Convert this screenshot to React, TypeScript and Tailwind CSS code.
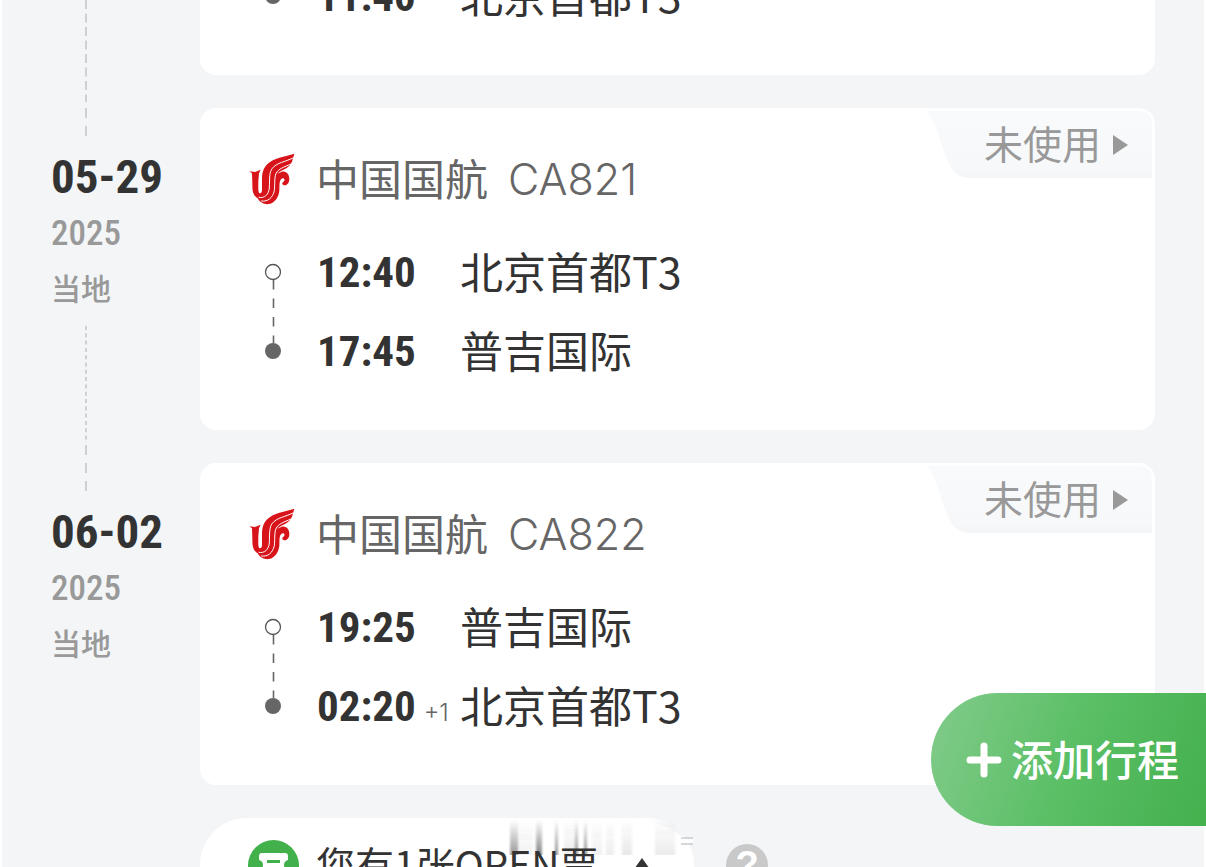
import React from "react";

type Leg = { time: string; place: string; dayOffset?: string };

type Trip = {
  date: string;
  year: string;
  zone: string;
  airline: string;
  flight: string;
  status: string;
  legs: [Leg, Leg];
};

const trips: Trip[] = [
  {
    date: "05-29",
    year: "2025",
    zone: "当地",
    airline: "中国国航",
    flight: "CA821",
    status: "未使用",
    legs: [
      { time: "12:40", place: "北京首都T3" },
      { time: "17:45", place: "普吉国际" },
    ],
  },
  {
    date: "06-02",
    year: "2025",
    zone: "当地",
    airline: "中国国航",
    flight: "CA822",
    status: "未使用",
    legs: [
      { time: "19:25", place: "普吉国际" },
      { time: "02:20", place: "北京首都T3", dayOffset: "+1" },
    ],
  },
];

const narrow = "font-['Roboto_Condensed','Open_Sans_Condensed','Noto_Sans_Condensed','Noto_Sans_CJK_SC',sans-serif]";

function AirlineLogo() {
  return (
    <svg className="h-[52px] w-[46px] shrink-0" viewBox="656 37 138 156" fill="none" aria-hidden="true">
      <path
        fill="#d8141b"
        d="M792 39C765 47 728 52 709 72C697 86 695 100 695 118L695 148C695 158 689 160 686 156C683 150 684 140 684 122L686 98L691 87L674 94L657 92L665 98L666 130C666 152 668 164 682 173C688 186 703 192 716 190C735 186 745 168 747 150C748 134 746 124 752 116C758 110 764 113 762 120C760 124 755 123 756 130C762 139 777 132 777 115C777 98 765 91 754 93L741 99C750 87 779 85 786 60Z"
      />
      <g stroke="#fff" strokeLinecap="round" strokeWidth="3">
        <path d="M788 52C764 64 739 66 726 83C717 94 718 110 717 142C715 162 702 174 686 170" />
        <path d="M782 70C760 80 744 84 737 99C732 110 734 130 732 150C727 172 712 184 694 181" />
      </g>
    </svg>
  );
}

function Rail({ dash, className }: { dash: string; className: string }) {
  return (
    <svg className={`ml-[85px] w-[2px] ${className}`} aria-hidden="true">
      <line x1="1" y1="0" x2="1" y2="100%" stroke="#cfd0d2" strokeWidth="2" strokeDasharray={dash} />
    </svg>
  );
}

function LegRow({ leg }: { leg: Leg }) {
  return (
    <div className="flex h-[79px] items-center">
      <div className="flex w-[143px] items-baseline gap-2">
        <span className={`text-[43px] leading-none font-bold text-[#333] ${narrow}`}>{leg.time}</span>
        {leg.dayOffset && (
          <span className="font-['Inter',sans-serif] text-2xl leading-none font-light text-[#666]">{leg.dayOffset}</span>
        )}
      </div>
      <span className="pb-1 text-[43px] leading-none text-[#333]">{leg.place}</span>
    </div>
  );
}

function LegMarkers() {
  return (
    <svg className="mr-5 h-[158px] w-[48px] shrink-0" viewBox="0 0 48 158" fill="none" aria-hidden="true">
      <circle cx="24" cy="39" r="7.5" stroke="#555" strokeWidth="1.3" />
      <path d="M24.5 47V110" stroke="#666" strokeWidth="1.6" strokeDasharray="9.5 9" />
      <circle cx="24" cy="118" r="8" fill="#666" />
    </svg>
  );
}

function StatusButton({ label }: { label: string }) {
  return (
    <button type="button" className="absolute top-[3px] right-[3px] flex h-[67px] w-[225px] items-center pl-[57px]">
      <svg className="absolute inset-0 h-full w-full" viewBox="0 0 225 67" aria-hidden="true">
        <defs>
          <linearGradient id="tab" x1="0" y1="0" x2="0" y2="1">
            <stop offset="0" stopColor="#f9fafb" />
            <stop offset="0.85" stopColor="#f7f8fa" />
            <stop offset="1" stopColor="#f4f5f6" />
          </linearGradient>
        </defs>
        <path fill="url(#tab)" d="M0 0H212Q225 0 225 13V67H42Q28 66 22 53Q17 42 12 25Q7 8 0 0Z" />
      </svg>
      <span className="relative pb-1 text-[39px] leading-none text-[#999]">{label}</span>
      <svg className="relative ml-3 h-[22px] w-[15px]" viewBox="0 0 15 22" aria-hidden="true">
        <path d="M0 1L15 11L0 21Z" fill="#999" />
      </svg>
    </button>
  );
}

function TripRow({ trip, last }: { trip: Trip; last: boolean }) {
  return (
    <li className="flex">
      <div className="flex w-[200px] shrink-0 flex-col">
        <Rail dash="10 8" className="h-[30px]" />
        <div className="mt-[14px] pl-[51px]">
          <p className={`text-[47px] leading-[50px] font-bold text-[#333] ${narrow}`}>{trip.date}</p>
          <p className={`mt-3 text-[35px] leading-[40px] font-medium text-[#999] ${narrow}`}>{trip.year}</p>
          <p className="mt-[13px] text-[30px] leading-[40px] font-medium text-[#999]">{trip.zone}</p>
        </div>
        {!last && <Rail dash="4 3.3" className="mt-[19px] h-[117px]" />}
        {!last && <Rail dash="10 8" className="mt-[2px] h-[18px]" />}
      </div>
      <article className="relative mr-[51px] mb-[33px] min-w-0 flex-1 rounded-2xl bg-white pt-[45px] pb-[39px] pl-[49px]">
        <StatusButton label={trip.status} />
        <h2 className="flex h-[52px] items-center text-[43px] leading-none text-[#666]">
          <AirlineLogo />
          <span className="ml-[21px] pb-1">{trip.airline}</span>
          <span className="ml-[20px] font-['Inter',sans-serif] font-light">{trip.flight}</span>
        </h2>
        <div className="mt-7 flex">
          <LegMarkers />
          <div>
            {trip.legs.map((leg) => (
              <LegRow key={leg.time} leg={leg} />
            ))}
          </div>
        </div>
      </article>
    </li>
  );
}

function PreviousTrip() {
  return (
    <li className="flex h-[108px]">
      <div className="w-[200px] shrink-0">
        <Rail dash="9 4.5" className="h-[102px]" />
      </div>
      <article className="mr-[51px] mb-[33px] flex min-w-0 flex-1 items-end overflow-hidden rounded-b-2xl bg-white pb-[39px] pl-[49px]">
        <LegMarkers />
        <LegRow leg={{ time: "11:40", place: "北京首都T3" }} />
      </article>
    </li>
  );
}

function Smudge() {
  const bars = [
    { x: 0, w: 8, o: 0.55 },
    { x: 8, w: 15, o: 0.07 },
    { x: 26, w: 6, o: 0.65 },
    { x: 45, w: 3, o: 0.6 },
    { x: 54, w: 11, o: 0.1 },
    { x: 65, w: 3, o: 0.6 },
    { x: 74, w: 3, o: 0.6 },
    { x: 82, w: 10, o: 0.08 },
    { x: 96, w: 8, o: 0.09 },
    { x: 112, w: 10, o: 0.12 },
    { x: 145, w: 20, o: 0.1 },
  ];
  return (
    <svg className="absolute top-0 right-0 h-[40px] w-[185px]" viewBox="0 0 185 40" aria-hidden="true">
      <defs>
        <linearGradient id="smear" x1="0" y1="0" x2="0" y2="1">
          <stop offset="0" stopColor="#444" stopOpacity="0" />
          <stop offset="1" stopColor="#444" />
        </linearGradient>
        <linearGradient id="corner" x1="0" y1="0" x2="1" y2="0">
          <stop offset="0" stopColor="#f3f5f7" stopOpacity="0" />
          <stop offset="0.6" stopColor="#f3f5f7" />
        </linearGradient>
        <filter id="soft">
          <feGaussianBlur stdDeviation="0.8 0.4" />
        </filter>
      </defs>
      <path d="M140 0H185V18H172Q160 8 140 4Z" fill="url(#corner)" />
      <g filter="url(#soft)">
        {bars.map((b) => (
          <rect key={b.x} x={b.x + 1} y="2" width={b.w} height="35" fill="url(#smear)" opacity={b.o} />
        ))}
      </g>
      <path d="M172 20H184M172 26H184" stroke="#ccc" strokeWidth="1.5" />
      <path d="M172 23H184" stroke="#fff" strokeWidth="3" />
    </svg>
  );
}

function OpenTicketBar() {
  return (
    <div className="flex items-center pl-[200px]">
      <button type="button" className="relative flex h-[94px] w-[494px] items-center rounded-full bg-white pl-12 text-[39px] leading-none text-[#333]">
        <Smudge />
        <svg className="h-[51px] w-[51px]" viewBox="0 0 51 51" aria-hidden="true">
          <circle cx="25.5" cy="25.5" r="25.5" fill="#42b14b" />
          <path
            fill="#fff"
            d="M14 13H37Q40 13 40 16V20Q36 21 36 25Q36 29 40 30V35Q40 38 37 38H14Q11 38 11 35V30Q15 29 15 25Q15 21 11 20V16Q11 13 14 13Z"
          />
          <path d="M19 21.5H32" stroke="#42b14b" strokeWidth="3" />
        </svg>
        <span className="relative ml-[17px] pb-1">您有1张OPEN票</span>
        <svg className="ml-[34px] h-[14px] w-5" viewBox="0 0 20 14" aria-hidden="true">
          <path d="M10 0L20 14H0Z" fill="#333" />
        </svg>
      </button>
      <button
        type="button"
        aria-label="帮助"
        className="ml-8 flex h-[42px] w-[42px] items-center justify-center rounded-full bg-[#c9c9c9] font-['Liberation_Sans',sans-serif] text-[38px] leading-none font-bold text-white"
      >
        ?
      </button>
    </div>
  );
}

export default function App() {
  return (
    <div className="relative h-screen overflow-hidden border-x-2 border-white bg-[#f3f5f7] font-['Noto_Sans_CJK_SC',sans-serif]">
      <main className="-mr-[2px] -ml-[2px]">
        <ul>
          <PreviousTrip />
          {trips.map((trip, i) => (
            <TripRow key={trip.flight} trip={trip} last={i === trips.length - 1} />
          ))}
        </ul>
        <OpenTicketBar />
      </main>
      <button
        type="button"
        className="fixed right-0 bottom-[41px] flex h-[133px] items-center rounded-l-full bg-linear-[110deg] from-[#82cb8a] via-[#5bbf66] to-[#43b04d] pr-[27px] pl-[35px] text-[42px] leading-none font-medium text-white"
      >
        <svg className="mr-[9px] h-[36px] w-[36px]" viewBox="0 0 36 36" aria-hidden="true">
          <path d="M18 4V32M4 18H32" stroke="#fff" strokeWidth="7" strokeLinecap="round" />
        </svg>
        <span className="pb-1">添加行程</span>
      </button>
    </div>
  );
}
